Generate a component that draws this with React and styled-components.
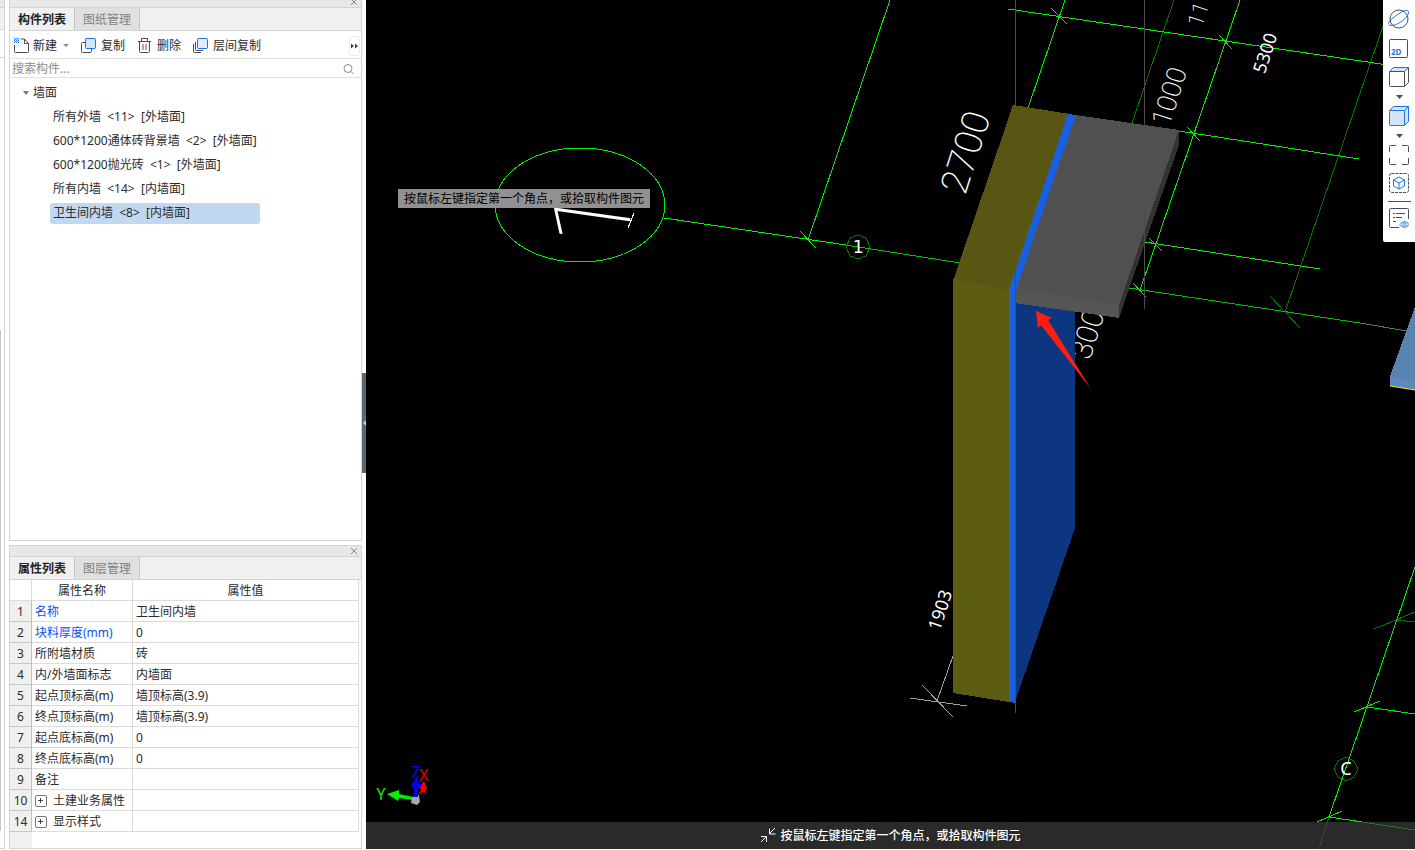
import React, { useState } from 'react';
import styled, { createGlobalStyle } from 'styled-components';

const GlobalStyle = createGlobalStyle`
    * {
        box-sizing: border-box;
    }

    body {
        margin: 0;
        background-color: #fff;
        color: #2b2b2b;
        font-family: "Noto Sans", "Noto Sans CJK SC", sans-serif;
        font-size: 12px;
        line-height: 16px;
        overflow: hidden;
    }

    button, input {
        margin: 0;
        padding: 0;
        border: 0;
        background: none;
        color: inherit;
        font: inherit;
    }
`;

const Page = styled.div`
    display: flex;
    height: 100vh;
    border-bottom: 1px solid #fff;
`;

const DockEdge = styled.div`
    display: flex;
    flex-direction: column;
    flex: none;
    width: 5px;
    margin-right: 4px;
    border-right: 1px solid #d4d4d4;
    border-bottom: 1px solid #d4d4d4;
`;

const EdgeBlock = styled.div`
    flex: none;
    height: ${props => props.$height}px;
    border-bottom: 1px solid #d4d4d4;
    background-color: ${props => props.$color};
`;

const EdgeTrack = styled.div`
    flex: 1;
    width: 1px;
    margin: 272px 0 17px;
    background-color: #c8c8c8;
`;

const Sidebar = styled.div`
    display: flex;
    flex-direction: column;
    flex: none;
    width: 353px;
    gap: 4px;
`;

const Panel = styled.section`
    display: flex;
    flex-direction: column;
    flex: ${props => (props.$grow ? '1' : 'none')};
    min-height: 0;
    border: 1px solid #d4d4d4;
    border-top: ${props => (props.$grow ? '0' : '1px solid #d4d4d4')};
`;

const TitleBar = styled.div`
    display: flex;
    flex: none;
    justify-content: flex-end;
    align-items: flex-end;
    height: ${props => (props.$clipped ? 8 : 11)}px;
    padding: 0 3px 1px 0;
    overflow: hidden;
    border-bottom: 1px solid #d4d4d4;
    background-color: #e8e8e8;
`;

const CloseButton = styled.button`
    display: flex;
    flex: none;
    color: #8a8a8a;
`;

const Tabs = styled.div`
    display: flex;
    flex: none;
    height: 23px;
    border-bottom: 1px solid #d4d4d4;
    background-color: #f0f0f0;
`;

const Tab = styled.button`
    width: 65px;
    height: 22px;
    padding-top: 2px;
    border-right: 1px solid #c4c4c8;
    background-color: ${props => (props.$active ? '#f0f0f0' : '#e0e0e0')};
    color: ${props => (props.$active ? '#222' : '#808080')};
    font-weight: ${props => (props.$active ? 'bold' : 'normal')};
`;

const Toolbar = styled.div`
    display: flex;
    flex: none;
    align-items: center;
    gap: 12px;
    height: 28px;
    padding: 2px 1px 0 3px;
    border-bottom: 1px solid #e0e0e0;
`;

const ToolButton = styled.button`
    display: flex;
    align-items: center;
    gap: 4px;
`;

const Caret = styled.span`
    margin-left: 2px;
    border: 3px solid transparent;
    border-top-color: #8a8a8a;
    border-bottom: 0;
`;

const MoreButton = styled.button`
    display: flex;
    align-items: center;
    justify-content: center;
    width: 11px;
    height: 20px;
    margin-left: auto;
    border: 1px solid #ececec;
    border-radius: 3px;
`;

const Search = styled.label`
    display: flex;
    flex: none;
    align-items: center;
    height: 19px;
    padding: 2px 7px 0 2px;
    border-bottom: 1px solid #e0e0e0;
`;

const SearchInput = styled.input`
    flex: 1;
    min-width: 0;
    outline: 0;

    &::placeholder {
        color: #8c8c8c;
        opacity: 1;
    }
`;

const Tree = styled.div`
    flex: 1;
    min-height: 0;
    padding: 3px 0 0 13px;
    overflow: hidden;
`;

const TreeGroup = styled.button`
    display: flex;
    align-items: center;
    gap: 4px;
    height: 24px;
`;

const GroupCaret = styled.span`
    border: 3px solid transparent;
    border-top: 4px solid #777;
    border-bottom: 0;
`;

const TreeList = styled.ul`
    margin: 0;
    padding: 0 0 0 27px;
    list-style: none;
`;

const TreeItem = styled.li`
    display: flex;
    align-items: center;
    height: 24px;
`;

const TreeLabel = styled.button`
    width: 210px;
    height: 21px;
    padding: 0 3px;
    border-radius: 3px;
    background-color: ${props => (props.$selected ? '#c2d8f0' : 'transparent')};
    text-align: left;
    white-space: pre;
`;

const Properties = styled.div`
    padding: 0 2px 16px 0;
    background: linear-gradient(to right, #f0f0f0 22px, #fff 22px);
`;

const Table = styled.table`
    width: 100%;
    table-layout: fixed;
    border-collapse: separate;
    border-spacing: 0;
`;

const HeadCell = styled.th`
    width: ${props => props.$width};
    height: 21px;
    padding: 2px 0 0;
    border-right: 1px solid #dcdcdc;
    border-bottom: 1px solid #dcdcdc;
    background-color: #fff;
    font-weight: normal;
`;

const IndexCell = styled.td`
    height: 21px;
    padding: 2px 0 0;
    border-right: 1px solid #c0c0c0;
    border-bottom: 1px solid #c8c8c8;
    background-color: #f0f0f0;
    text-align: center;
`;

const Cell = styled.td`
    height: 21px;
    padding: 2px 3px 0;
    border-right: 1px solid #dcdcdc;
    border-bottom: 1px solid #dcdcdc;
    background-color: #fff;
    color: ${props => (props.$link ? '#0a50f0' : 'inherit')};
    white-space: nowrap;
`;

const GroupName = styled.div`
    display: flex;
    align-items: center;
    gap: 6px;
`;

const ExpandButton = styled.button`
    display: flex;
    align-items: center;
    justify-content: center;
    width: 12px;
    height: 12px;
    border: 1px solid #777;
    border-radius: 2px;
`;

const Splitter = styled.div`
    display: flex;
    flex: none;
    align-items: center;
    width: 4px;
    padding-bottom: 4px;
`;

const SplitterHandle = styled.button`
    display: flex;
    align-items: center;
    justify-content: flex-end;
    width: 4px;
    height: 100px;
    background-color: #5a6673;
`;

const SplitterArrow = styled.span`
    border: 3px solid transparent;
    border-right-color: #c8ced4;
    border-left: 0;
`;

const Viewport = styled.main`
    position: relative;
    flex: 1;
    min-width: 0;
    overflow: hidden;
    background-color: #000;
`;

const Scene = styled.svg`
    display: block;
    width: 100%;
    height: 100%;
`;

const Grid = styled.g`
    fill: none;
    stroke: ${props => props.$color};
    stroke-width: 1;
    shape-rendering: crispEdges;
`;

const Solid = styled.polygon`
    shape-rendering: crispEdges;
`;

const Dimension = styled.text`
    fill: #fff;
    font-family: ${props => (props.$weight ? 'Roboto' : '"Noto Sans"')}, sans-serif;
    font-size: ${props => props.$size}px;
    font-weight: ${props => props.$weight || 400};
    text-anchor: middle;
`;

const AxisMark = styled.text`
    fill: #fff;
    font-family: ${props => (props.$mono ? '"DejaVu Sans Mono", monospace' : '"Noto Sans", sans-serif')};
    font-size: 18px;
    text-anchor: middle;
`;

const AxisName = styled.text`
    fill: ${props => props.$color};
    font-family: "Noto Sans", sans-serif;
    font-size: 16px;
    text-anchor: middle;
`;

const Hint = styled.div`
    position: absolute;
    top: 189px;
    left: 32px;
    padding: 2px 6px 1px;
    background-color: #919191;
    color: #000;
    white-space: nowrap;
`;

const StatusBar = styled.footer`
    position: absolute;
    right: 0;
    bottom: 0;
    left: 0;
    display: flex;
    align-items: center;
    justify-content: center;
    gap: 4px;
    height: 27px;
    padding-top: 1px;
    background-color: rgba(60, 60, 60, 0.7);
    color: #fff;
    font-weight: 500;
`;

const ViewTools = styled.nav`
    position: absolute;
    top: 0;
    right: 0;
    display: flex;
    flex-direction: column;
    width: 32px;
    padding: 4px 0 9px;
    border-bottom-left-radius: 2px;
    background-color: #fff;
`;

const ViewButton = styled.button`
    display: flex;
    align-items: center;
    justify-content: center;
    height: ${props => (props.$compact ? 26 : 30)}px;
`;

const ViewCaret = styled.button`
    display: flex;
    align-items: center;
    justify-content: center;
    height: 13px;
`;

const Divider = styled.div`
    height: 1px;
    margin: 3px 4px 1px 5px;
    background-color: #4a4f5c;
`;

const IconText = styled.text`
    fill: #1a73e8;
    font-family: "Noto Sans", sans-serif;
    font-size: 8px;
    font-weight: bold;
`;

const INK = '#474c5e';
const BLUE = '#1a73e8';

const components = [
    '所有外墙  <11>  [外墙面]',
    '600*1200通体砖背景墙  <2>  [外墙面]',
    '600*1200抛光砖  <1>  [外墙面]',
    '所有内墙  <14>  [内墙面]',
    '卫生间内墙  <8>  [内墙面]',
];

const properties = [
    { id: 1, name: '名称', value: '卫生间内墙', link: true },
    { id: 2, name: '块料厚度(mm)', value: '0', link: true },
    { id: 3, name: '所附墙材质', value: '砖' },
    { id: 4, name: '内/外墙面标志', value: '内墙面' },
    { id: 5, name: '起点顶标高(m)', value: '墙顶标高(3.9)' },
    { id: 6, name: '终点顶标高(m)', value: '墙顶标高(3.9)' },
    { id: 7, name: '起点底标高(m)', value: '0' },
    { id: 8, name: '终点底标高(m)', value: '0' },
    { id: 9, name: '备注', value: '' },
    { id: 10, name: '土建业务属性', value: '', group: true },
    { id: 14, name: '显示样式', value: '', group: true },
];

const message = '按鼠标左键指定第一个角点，或拾取构件图元';

const CloseIcon = () => (
    <svg width="8" height="8" viewBox="0 0 8 8" fill="none" stroke="currentColor">
        <path d="M1 1l6 6M7 1L1 7" />
    </svg>
);

const NewIcon = () => (
    <svg width="16" height="16" viewBox="0 0 16 16" fill="none" stroke={INK}>
        <path d="M1.500 7v6.500a1 1 0 0 0 1 1h12a1 1 0 0 0 1-1V5.500L11.500 1H7.500M11.500 1v4.500h4" />
        <path d="M1 .5h1M3 .5h1M5 .5h1M2 1.500h1M4 1.500h1M1 2.500h1M3 2.500h1M5 2.500h1M2 3.500h1M4 3.500h1M1 4.500h1M3 4.500h1M5 4.500h1" stroke={BLUE} />
    </svg>
);

const CopyIcon = () => (
    <svg width="16" height="16" viewBox="0 0 16 16" fill="none" stroke={INK}>
        <path d="M4 4.500H1.500a1 1 0 0 0-1 1v8a1 1 0 0 0 1 1h8a1 1 0 0 0 1-1V11" />
        <rect x="4.500" y=".5" width="10" height="10" rx="1" fill="#d3e4fb" stroke={BLUE} />
    </svg>
);

const DeleteIcon = () => (
    <svg width="16" height="16" viewBox="0 0 16 16" fill="none" stroke={INK}>
        <path d="M1 3.500h13M4.500 3V.5h6V3M2.500 4v9.500a1 1 0 0 0 1 1h8a1 1 0 0 0 1-1V4" />
        <path d="M6 6v6M9 6v6" stroke="#e02020" />
    </svg>
);

const LayerCopyIcon = () => (
    <svg width="16" height="16" viewBox="0 0 16 16" fill="none" stroke={INK}>
        <path d="M.5 6v7.500a1 1 0 0 0 1 1H8M2.500 4v7.500a1 1 0 0 0 1 1H10" />
        <rect x="4.500" y=".5" width="10" height="10" rx="1" fill="#e2edfc" stroke={BLUE} />
    </svg>
);

const MoreIcon = () => (
    <svg width="7" height="6" viewBox="0 0 7 6" fill="#3a3f4c">
        <path d="M0 .5L3 3 0 5.500zM4 .5L7 3 4 5.500z" />
    </svg>
);

const SearchIcon = () => (
    <svg width="11" height="11" viewBox="0 0 11 11" fill="none" stroke="#8a8a8a">
        <circle cx="5" cy="4.500" r="4" />
        <path d="M8 7.500l2.500 2.500" />
    </svg>
);

const OrbitIcon = () => (
    <svg width="22" height="20" viewBox="0 0 22 20" fill="none" stroke={INK}>
        <circle cx="11" cy="10" r="9" />
        <path d="M5 9C12 3 20-1 20.500 3c.3 3-3.500 7.500-8.500 10.500C6 17 1 17.500.7 14.500.5 13 2 11 5 9z" stroke={BLUE} />
    </svg>
);

const PlanIcon = () => (
    <svg width="20" height="20" viewBox="0 0 20 20" fill="none" stroke={INK}>
        <rect x=".5" y=".5" width="18" height="18" rx="1" />
        <IconText x="2" y="16" stroke="none">2D</IconText>
    </svg>
);

const CubeIcon = ({ solid }) => (
    <svg width="20" height="20" viewBox="0 0 20 20" fill={solid ? '#d3e4fb' : 'none'} stroke={solid ? BLUE : INK} strokeLinejoin="round">
        <path d="M15.500 4.500l4-4V15.500l-4 4z" />
        <path d="M.5 4.500l4-4h15l-4 4z" fill="#d3e4fb" stroke={BLUE} />
        <rect x=".5" y="4.500" width="15" height="15" rx="1" />
    </svg>
);

const CaretIcon = () => (
    <svg width="7" height="4" viewBox="0 0 7 4" fill={INK}>
        <path d="M0 0h7L3.500 4z" />
    </svg>
);

const FitIcon = () => (
    <svg width="20" height="20" viewBox="0 0 20 20" fill="none" stroke={INK}>
        <path d="M.5 7V1.500a1 1 0 0 1 1-1H7M13 .5h5.500a1 1 0 0 1 1 1V7M19.500 13v5.500a1 1 0 0 1-1 1H13M7 19.500H1.500a1 1 0 0 1-1-1V13" />
    </svg>
);

const IsolateIcon = () => (
    <svg width="20" height="20" viewBox="0 0 20 20" fill="none" stroke={INK}>
        <rect x=".5" y=".5" width="19" height="19" rx="2" strokeDasharray="3 1" />
        <path d="M10 4l5.500 3v6L10 16l-5.500-3V7zM4.500 7l5.500 3 5.500-3M10 10v6" stroke={BLUE} />
    </svg>
);

const DisplayIcon = () => (
    <svg width="20" height="20" viewBox="0 0 20 20" fill="none" stroke={INK}>
        <path d="M10 19.500H1.500a1 1 0 0 1-1-1v-17a1 1 0 0 1 1-1h17a1 1 0 0 1 1 1V11" />
        <path d="M4 5.500h2M7 5.500h9M4 9.500h2M7 9.500h6M4 13.500h3" />
        <path d="M11 16.500c2.500-3.700 6.500-3.700 9 0-2.500 3.700-6.500 3.700-9 0z" stroke={BLUE} />
        <circle cx="15.500" cy="16.500" r="1.500" stroke={BLUE} />
    </svg>
);

const CollapseIcon = () => (
    <svg width="16" height="16" viewBox="0 0 16 16" fill="none" stroke="#fff">
        <path d="M15 0L9.500 5.500M9.500 .5v5.500h6M1 14l5.500-5.500M1 8.500h5.500v5.500" />
    </svg>
);

const ComponentPanel = () => {
    const [selected, setSelected] = useState(4);

    return (
        <Panel $grow>
            <TitleBar $clipped>
                <CloseButton aria-label="关闭"><CloseIcon /></CloseButton>
            </TitleBar>
            <Tabs>
                <Tab $active>构件列表</Tab>
                <Tab>图纸管理</Tab>
            </Tabs>
            <Toolbar>
                <ToolButton><NewIcon />新建<Caret /></ToolButton>
                <ToolButton><CopyIcon />复制</ToolButton>
                <ToolButton><DeleteIcon />删除</ToolButton>
                <ToolButton><LayerCopyIcon />层间复制</ToolButton>
                <MoreButton aria-label="更多"><MoreIcon /></MoreButton>
            </Toolbar>
            <Search>
                <SearchInput type="text" placeholder="搜索构件..." />
                <SearchIcon />
            </Search>
            <Tree>
                <TreeGroup><GroupCaret />墙面</TreeGroup>
                <TreeList>
                    {components.map((name, index) => (
                        <TreeItem key={name}>
                            <TreeLabel $selected={index === selected} onClick={() => setSelected(index)}>{name}</TreeLabel>
                        </TreeItem>
                    ))}
                </TreeList>
            </Tree>
        </Panel>
    );
};

const PropertyPanel = () => (
    <Panel>
        <TitleBar>
            <CloseButton aria-label="关闭"><CloseIcon /></CloseButton>
        </TitleBar>
        <Tabs>
            <Tab $active>属性列表</Tab>
            <Tab>图层管理</Tab>
        </Tabs>
        <Properties>
            <Table>
                <thead>
                    <tr>
                        <HeadCell $width="22px" />
                        <HeadCell $width="101px">属性名称</HeadCell>
                        <HeadCell $width="auto">属性值</HeadCell>
                    </tr>
                </thead>
                <tbody>
                    {properties.map(({ id, name, value, link, group }) => (
                        <tr key={id}>
                            <IndexCell>{id}</IndexCell>
                            <Cell $link={link}>
                                {group ? (
                                    <GroupName>
                                        <ExpandButton aria-label="展开">
                                            <svg width="6" height="6" viewBox="0 0 6 6" stroke="#444">
                                                <path d="M0 2.500h5M2.500 0v5" />
                                            </svg>
                                        </ExpandButton>
                                        {name}
                                    </GroupName>
                                ) : name}
                            </Cell>
                            <Cell>{value}</Cell>
                        </tr>
                    ))}
                </tbody>
            </Table>
        </Properties>
    </Panel>
);

const Model = () => (
    <Scene viewBox="366 0 1049 849" preserveAspectRatio="xMinYMin slice">
        <Grid $color="#007800">
            <path d="M1174 0L1132 123M1392 0L1285 312M1270 296L1300 328" />
            <path d="M1374 629L1415 612M1397 620L1415 622" />
            <path d="M1319 849L1329 817" />
            <path d="M850 238l8-3 8 3 4 9-4 9-8 3-8-3-4-9z" />
            <path d="M1338 761l8-4 8 4 4 8-4 8-8 4-8-4-4-8z" />
        </Grid>
        <Grid $color="#00f000">
            <ellipse cx="580" cy="205" rx="85" ry="57" />
            <path d="M890 0L808 240M664 218L846 245M800 231L816 248" />
            <path d="M1008 9L1415 69M1051 8L1067 24" />
            <path d="M1065 0L1028 108M1240 0L1140 290" />
            <path d="M1219 35L1232 49M1187 127L1200 141M1149 238L1162 251M1133 283L1146 297" />
            <path d="M1179 131L1359 159M1145 242L1320 269" />
            <path d="M1415 567L1329 817M1354 712L1380 701M1367 707L1415 714M1317 822L1342 811M1329 817L1415 830" />
        </Grid>
        <Grid $color="#00c000">
            <path d="M846 245L960 263M1129 288L1360 323" />
        </Grid>
        <Grid $color="#4c804c">
            <path d="M1360 323L1407 331" />
        </Grid>

        <Dimension $weight={100} $size={108} transform="translate(591 218) rotate(-82)" dy=".36em">1</Dimension>
        <Grid $color="#fff">
            <path d="M634 213L628 228" />
        </Grid>
        <Dimension $weight={200} $size={38} transform="translate(965 152) rotate(-72)" dy=".36em">2700</Dimension>
        <Dimension $weight={200} $size={27} transform="translate(1169 96) rotate(-72)" dy=".36em">1000</Dimension>
        <Dimension $weight={200} $size={22} transform="translate(1198 14) rotate(-72)" dy=".36em">11</Dimension>
        <Dimension $weight={200} $size={30} transform="translate(1087 334) rotate(-72)" dy=".36em">300</Dimension>
        <Dimension $size={18} transform="translate(1265 53) rotate(-72)" dy=".36em">5300</Dimension>
        <Dimension $size={18} transform="translate(940 610) rotate(-72)" dy=".36em">1903</Dimension>
        <AxisMark $mono x="858" y="247" dy=".36em">1</AxisMark>
        <AxisMark x="1346" y="769" dy=".36em">C</AxisMark>

        <Solid points="1013,105 1070,114 1010,292 953,281" fill="#585612" />
        <Solid points="953,279 1009,290 1009,702 953,693" fill="#5c5c12" />
        <Solid points="1015,302 1075,310 1075,528 1015,702" fill="#0d3680" />
        <Solid points="1076,115 1179,130 1119,305 1015,288" fill="#505050" />
        <Solid points="1015,288 1119,305 1119,318 1015,303" fill="#555" />
        <Solid points="1179,130 1179,145 1119,318 1119,305" fill="#333" />
        <Solid points="1068,114 1076,115 1016,290 1016,703 1009,702 1009,289" fill="#1a5fe0" />
        <Grid $color="#4c4c4c">
            <path d="M1015.500 0V713M1144.500 0V309" />
        </Grid>
        <Grid $color="#a0a0a0">
            <path d="M953 656L937 701M910 698L967 706M922 685L953 717" />
        </Grid>

        <Solid points="1415,307 1390,376 1390,386 1415,390" fill="#5983b0" />
        <Solid points="1390,377 1415,380 1415,390 1390,386" fill="#5f89bb" />
        <path d="M1390 386L1415 390" stroke="#e8e820" />
        <polygon points="1036,311 1052,318 1048,320 1091,389 1041,325 1038,328" fill="#ff1e10" />

        <polygon points="418,796 421,790 419,787 424,781 427,788 425,793 422,792" fill="#f00000" />
        <polygon points="387,794 399,790 399,794 413,797 413,800 399,798 398,801" fill="#00f000" />
        <polygon points="412,797 419,795 420,802 417,805 411,803" fill="#a8a8a8" />
        <polygon points="416,777 422,786 418,788 418,797 414,797 414,788 411,786" fill="#0000f8" />
        <AxisName $color="#0000f8" x="416" y="778">Z</AxisName>
        <AxisName $color="#f00000" x="424" y="781">X</AxisName>
        <AxisName $color="#00f000" x="381" y="800">Y</AxisName>
    </Scene>
);

const App = () => {
    return (
        <>
            <GlobalStyle />
            <Page>
                <DockEdge>
                    <EdgeBlock $height={8} $color="#e8e8e8" />
                    <EdgeBlock $height={22} $color="#f0f0f0" />
                    <EdgeBlock $height={28} $color="#fff" />
                    <EdgeTrack />
                </DockEdge>
                <Sidebar>
                    <ComponentPanel />
                    <PropertyPanel />
                </Sidebar>
                <Splitter>
                    <SplitterHandle aria-label="收起"><SplitterArrow /></SplitterHandle>
                </Splitter>
                <Viewport>
                    <Model />
                    <Hint>{message}</Hint>
                    <StatusBar><CollapseIcon />{message}</StatusBar>
                    <ViewTools>
                        <ViewButton aria-label="动态观察"><OrbitIcon /></ViewButton>
                        <ViewButton aria-label="二维"><PlanIcon /></ViewButton>
                        <ViewButton $compact aria-label="视图"><CubeIcon /></ViewButton>
                        <ViewCaret aria-label="视图选项"><CaretIcon /></ViewCaret>
                        <ViewButton $compact aria-label="实体"><CubeIcon solid /></ViewButton>
                        <ViewCaret aria-label="实体选项"><CaretIcon /></ViewCaret>
                        <ViewButton $compact aria-label="全屏"><FitIcon /></ViewButton>
                        <ViewButton aria-label="局部三维"><IsolateIcon /></ViewButton>
                        <Divider />
                        <ViewButton aria-label="显示设置"><DisplayIcon /></ViewButton>
                    </ViewTools>
                </Viewport>
            </Page>
        </>
    );
};

export default App;
